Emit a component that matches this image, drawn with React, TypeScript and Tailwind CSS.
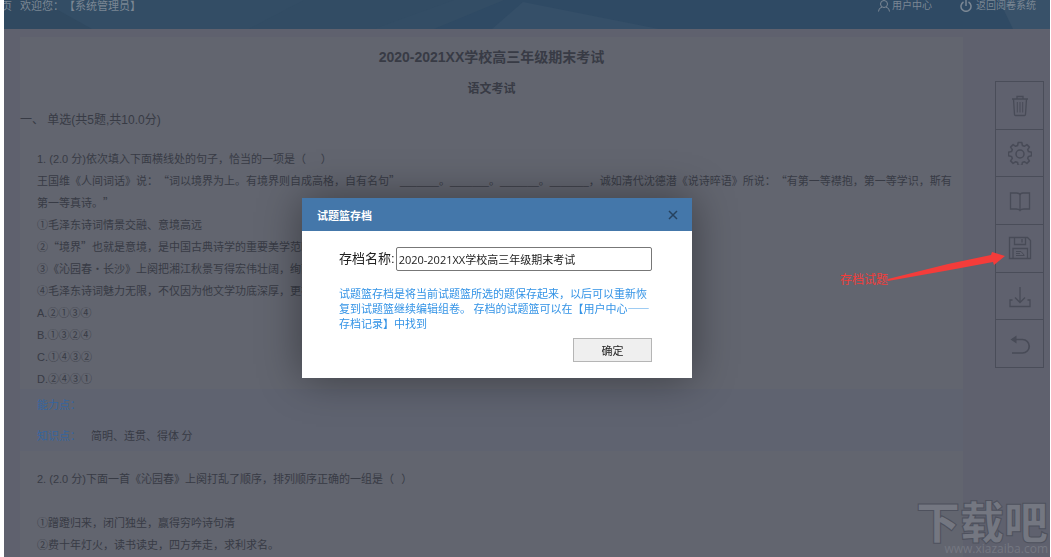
import type { ReactNode } from "react";

const questionOne = [
  "①毛泽东诗词情景交融、意境高远",
  "②“境界”也就是意境，是中国古典诗学的重要美学范畴",
  "③《沁园春·长沙》上阕把湘江秋景写得宏伟壮阔，绚丽多彩",
  "④毛泽东诗词魅力无限，不仅因为他文学功底深厚，更在于胸怀",
];

const options = [
  { key: "A.", text: "②①③④" },
  { key: "B.", text: "①③②④" },
  { key: "C.", text: "①④③②" },
  { key: "D.", text: "②④③①" },
];

const cjk = "font-['Noto_Sans_CJK_SC',sans-serif]";
const latin = "font-['Liberation_Sans','Noto_Sans_CJK_SC',sans-serif]";

function Icon({ children, size = 24 }: { children: ReactNode; size?: number }) {
  return (
    <svg
      width={size}
      height={size}
      viewBox="0 0 24 24"
      fill="none"
      stroke="currentColor"
      strokeWidth="1.3"
      aria-hidden="true"
    >
      {children}
    </svg>
  );
}

const tools = [
  {
    label: "清空",
    icon: (
      <>
        <path d="M4 6h16M9 6V3.500h6V6M5.500 6l1 15.500q.1 1 1 1h9q.9 0 1-1l1-15.500" />
        <path d="M9.300 9v10.500M12 9v10.500M14.700 9v10.500" strokeWidth="1" />
      </>
    ),
  },
  {
    label: "设置",
    icon: (
      <>
        <path
          d="M10.200 1.500h3.600l.6 3 1.900.8 2.600-1.700 2.500 2.500-1.700 2.600.8 1.900 3 .6v3.600l-3 .6-.8 1.900 1.700 2.600-2.500 2.500-2.600-1.700-1.900.8-.6 3h-3.600l-.6-3-1.900-.8-2.600 1.700-2.500-2.500 1.700-2.600-.8-1.900-3-.6v-3.600l3-.6.8-1.900-1.700-2.600 2.500-2.500 2.600 1.700 1.900-.8z"
          strokeLinejoin="round"
          strokeWidth="1.500"
        />
        <circle cx="12" cy="13" r="4" strokeWidth="1.500" />
      </>
    ),
  },
  {
    label: "预览",
    icon: <path d="M7 4H2.500v16H8q3 0 4 1.500 1-1.500 4-1.500h5.500V4H15q-3 0-3 2.500v15M7 4h1.500Q12 4 12 6.500" />,
  },
  {
    label: "存档试题",
    icon: (
      <>
        <path d="M1.500 1.500h18l3 3v18h-21zM6.500 1.500v7h11v-7M14 3v3.500" />
        <path d="M5 22.500v-10h14.500v10" />
        <path d="M8 15.500h5l3.500 4M8 17.500h4M8 19.500h8" strokeWidth="1" />
      </>
    ),
  },
  {
    label: "下载",
    icon: <path d="M12 3v15M7 13.500l5 5 5-5M4.500 16H2v6.500h20V16h-2.500" />,
  },
  {
    label: "返回",
    icon: (
      <>
        <path d="M4 7.500h10.500a6.500 6.500 0 0 1 0 13.500H4" strokeWidth="1.700" />
        <path d="M8.500 3.500L2.500 7.500l6 4z" fill="currentColor" stroke="none" />
      </>
    ),
  },
];

function Header() {
  return (
    <header className="relative h-[29px] overflow-hidden bg-[#2f4a64] text-[#7b8794]">
      <svg
        className="absolute inset-0 h-full w-full"
        viewBox="0 0 1046 29"
        preserveAspectRatio="none"
        aria-hidden="true"
      >
        <path d="M0 0h500L430 29H0z" fill="#334d65" />
        <path d="M0 0h36l52 29H0z" fill="#304960" />
        <path d="M300 0h150l-80 29H245z" fill="#324c64" />
        <path d="M519 2L655 29H488z" fill="#354f68" />
        <path d="M995 0h51v29h-37z" fill="#385169" />
      </svg>
      <div className="relative flex justify-between text-[11px] leading-[10px]">
        <div className="flex gap-2">
          <span className="flex w-2 justify-end overflow-hidden pb-2">页</span>
          <span>欢迎您：【系统管理员】</span>
        </div>
        <nav className="flex gap-7 pr-3.5 text-[10px]">
          <a href="#user" className="flex gap-0.5">
            <Icon size={12}>
              <circle cx="12" cy="8" r="7" strokeWidth="2" />
              <path d="M1 23q0-7 7-9M23 23q0-7-7-9" strokeWidth="2" />
            </Icon>
            用户中心
          </a>
          <a href="#back" className="flex gap-1">
            <Icon size={12}>
              <path d="M7 4a10 10 0 1 0 10 0M12 0v12" strokeWidth="3" />
            </Icon>
            返回阅卷系统
          </a>
        </nav>
      </div>
    </header>
  );
}

function Latin({ children }: { children: ReactNode }) {
  return <span className={`${latin} leading-none`}>{children}</span>;
}

function Blank() {
  return <span className={`${latin} text-[10px] leading-none`}>_______</span>;
}

function Paper() {
  return (
    <article className="mt-2 min-w-0 flex-1 bg-[#62656f] pt-2 whitespace-nowrap">
      <h1 className={`${latin} text-center text-sm leading-6 font-bold`}>
        2020-2021XX学校高三年级期末考试
      </h1>
      <h2 className="mt-2 text-center text-xs leading-[22px] font-bold">语文考试</h2>
      <h3 className={`${latin} mt-2.5 text-xs leading-[22px]`}>
        一、 单选(共5题,共10.0分)
      </h3>

      <section className="mt-4 px-[17px]">
        <p>
          <Latin>1. (2.0 分)</Latin>
          依次填入下面横线处的句子，恰当的一项是（{"\u00a0".repeat(6)}）
        </p>
        <p>
          王国维《人间词话》说：“词以境界为上。有境界则自成高格，自有名句”
          <Blank />。<Blank />。<Blank />。<Blank />
          ，诚如清代沈德潜《说诗晬语》所说：“有第一等襟抱，第一等学识，斯有
          <br />
          第一等真诗。”
        </p>
        {questionOne.map((line) => (
          <p key={line}>{line}</p>
        ))}
        {options.map((option) => (
          <p key={option.key}>
            <Latin>{option.key}</Latin>
            {option.text}
          </p>
        ))}
      </section>

      <dl className="bg-[#5f6370] px-[17px] leading-[31px]">
        <div className="flex gap-2.5">
          <dt className="text-[#36659f]">能力点：</dt>
        </div>
        <div className="flex gap-2.5">
          <dt className="text-[#36659f]">知识点：</dt>
          <dd>简明、连贯、得体 分</dd>
        </div>
      </dl>

      <section className="px-[17px] pt-4">
        <p>
          <Latin>2. (2.0 分)</Latin>
          下面一首《沁园春》上阕打乱了顺序，排列顺序正确的一组是（{"\u00a0".repeat(3)}）
        </p>
        <p className="pt-[22px]">①蹭蹬归来，闭门独坐，赢得穷吟诗句清</p>
        <p>②费十年灯火，读书读史，四方奔走，求利求名。</p>
      </section>
    </article>
  );
}

function Toolbar() {
  return (
    <aside className="relative mt-[52px] w-[49px] shrink-0">
      <div className="flex h-[287px] flex-col divide-y divide-[#4a4d59] border border-[#4a4d59] text-[#484b57]">
        {tools.map((tool) => (
          <button
            key={tool.label}
            type="button"
            aria-label={tool.label}
            className="flex flex-1 items-center justify-center"
          >
            <Icon>{tool.icon}</Icon>
          </button>
        ))}
      </div>
      <div className="absolute top-[170px] right-[39px] flex items-end whitespace-nowrap text-[#f43c3a]">
        <span className="text-xs leading-2">存档试题</span>
        <svg width="117" height="32" viewBox="0 0 117 32" aria-hidden="true">
          <path d="M0 28L60 13 103 4 104 1 117 5 106 14 105 11 62 19 0 30z" fill="#f43c3a" />
        </svg>
      </div>
    </aside>
  );
}

function ArchiveDialog() {
  return (
    <div className="fixed inset-0 flex items-start justify-center pt-[198px] pr-[57px]">
      <form
        role="dialog"
        aria-labelledby="dialog-title"
        className="w-[390px] bg-white text-[#222] shadow-[0_0_40px_rgba(0,0,0,0.4)]"
      >
        <div className="flex h-[33px] items-center justify-between bg-[#4477aa] pr-3.5 pl-[15px]">
          <h2 id="dialog-title" className="text-[11px] font-bold text-white">
            试题篮存档
          </h2>
          <button type="button" aria-label="关闭" className="text-[#26425f]">
            <svg width="10" height="10" viewBox="0 0 10 10" aria-hidden="true">
              <path d="M1 1l8 8M9 1L1 9" stroke="currentColor" strokeWidth="1.500" />
            </svg>
          </button>
        </div>
        <div className="pt-4 pr-10 pb-4 pl-[37px]">
          <div className="flex items-center gap-px">
            <label htmlFor="archive-name" className={`${latin} shrink-0 text-[13px]`}>
              存档名称:
            </label>
            <input
              id="archive-name"
              defaultValue="2020-2021XX学校高三年级期末考试"
              className="h-6 min-w-0 flex-1 rounded-xs border border-[#777] px-0.5 font-['Open_Sans','Noto_Sans_CJK_SC',sans-serif] text-[11px]"
            />
          </div>
          <p className="mt-[15px] text-[11px] leading-[15px] text-[#3393e6]">
            试题篮存档是将当前试题篮所选的题保存起来，以后可以重新恢复到试题篮继续编辑组卷。
            存档的试题篮可以在【用户中心——存档记录】中找到
          </p>
          <div className="mt-[7px] flex justify-end">
            <button
              type="submit"
              className="h-6 w-[79px] border border-[#b5b5b5] bg-[#efefef] text-[11px]"
            >
              确定
            </button>
          </div>
        </div>
      </form>
    </div>
  );
}

function Watermark() {
  return (
    <div className="pointer-events-none absolute right-[3px] bottom-0 flex flex-col items-end text-[#747781]">
      <span className="text-[44px] leading-[42px] font-black [-webkit-text-stroke:1px_#4e515d]">
        下载吧
      </span>
      <span className="font-['Open_Sans',sans-serif] text-xs leading-4">
        www.xiazaiba.com
      </span>
    </div>
  );
}

export default function App() {
  return (
    <div
      lang="zh-CN"
      className={`${cjk} relative h-screen overflow-hidden bg-white pr-px pl-1 text-[11px] leading-[22px] text-[#383b45] [text-spacing-trim:space-all]`}
    >
      <Header />
      <main className="flex min-h-full items-stretch gap-8 bg-[#5f616e] pr-1.5 pl-4">
        <Paper />
        <Toolbar />
      </main>
      <Watermark />
      <ArchiveDialog />
    </div>
  );
}
